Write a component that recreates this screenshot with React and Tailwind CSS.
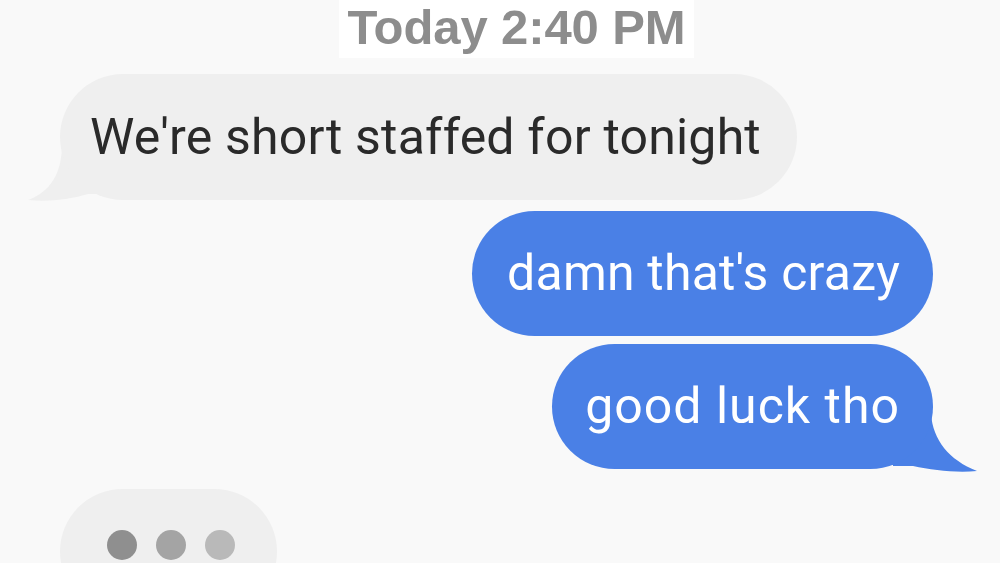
import React from 'react';

// Chat thread screenshot: timestamp, one incoming, two outgoing, typing indicator

const roboto = "font-['Roboto',sans-serif]";

function GrayTail() {
  return (
    <svg
      className="absolute left-[-32px] bottom-[-4px]"
      width="80"
      height="60"
      viewBox="0 0 80 60"
    >
      <path d="M34 0 C34 30 22 48 0 56 C20 58 40 56 60 50 L80 50 L80 0 Z" fill="#efefef" />
    </svg>
  );
}

function BlueTail() {
  return (
    <svg
      className="absolute right-[-44px] bottom-[-5px]"
      width="84"
      height="60"
      viewBox="0 0 84 60"
    >
      <path d="M38 0 C40 26 56 46 84 57 C62 59 40 56 20 52 L0 52 L0 0 Z" fill="#4a80e6" />
    </svg>
  );
}

export default function App() {
  return (
    <div className="w-[1000px] h-[563px] overflow-hidden bg-[#f9f9f9] flex flex-col">
      {/* Timestamp */}
      <div className="shrink-0 ml-[339px] w-[355px] h-[58px] bg-white flex items-center justify-center">
        <span className="font-['Liberation_Sans',Arial,sans-serif] font-bold text-[49px] leading-none text-[#8d8d8d] tracking-[-0.1px] blur-[0.4px] mt-[-3px]">
          Today 2:40 PM
        </span>
      </div>

      {/* Incoming */}
      <div className="shrink-0 mt-[16px] ml-[60px] self-start relative">
        <GrayTail />
        <div className={`relative h-[126px] rounded-[63px] bg-[#efefef] pl-[30px] pr-[36px] flex items-center ${roboto} text-[50px] text-[#2a2a2a] tracking-[0.2px]`}>
          We're short staffed for tonight
        </div>
      </div>

      {/* Outgoing */}
      <div className="shrink-0 mt-[11px] mr-[67px] self-end">
        <div className={`h-[125px] rounded-[63px] bg-[#4a80e6] pl-[35px] pr-[33px] flex items-center ${roboto} text-[50px] text-white tracking-[0.2px]`}>
          damn that's crazy
        </div>
      </div>
      <div className="shrink-0 mt-[8px] mr-[67px] self-end relative">
        <BlueTail />
        <div className={`relative h-[125px] rounded-[63px] bg-[#4a80e6] pl-[33px] pr-[33px] flex items-center ${roboto} text-[50px] text-white tracking-[1px]`}>
          good luck tho
        </div>
      </div>

      {/* Typing indicator */}
      <div className="shrink-0 mt-[20px] ml-[60px] self-start w-[217px] h-[125px] rounded-[63px] bg-[#efefef] flex items-start justify-center gap-[19px] pt-[41px] pl-[4px]">
        <span className="w-[30px] h-[30px] rounded-full bg-[#8f8f8f]" />
        <span className="w-[30px] h-[30px] rounded-full bg-[#a4a4a4]" />
        <span className="w-[30px] h-[30px] rounded-full bg-[#b9b9b9]" />
      </div>
    </div>
  );
}
